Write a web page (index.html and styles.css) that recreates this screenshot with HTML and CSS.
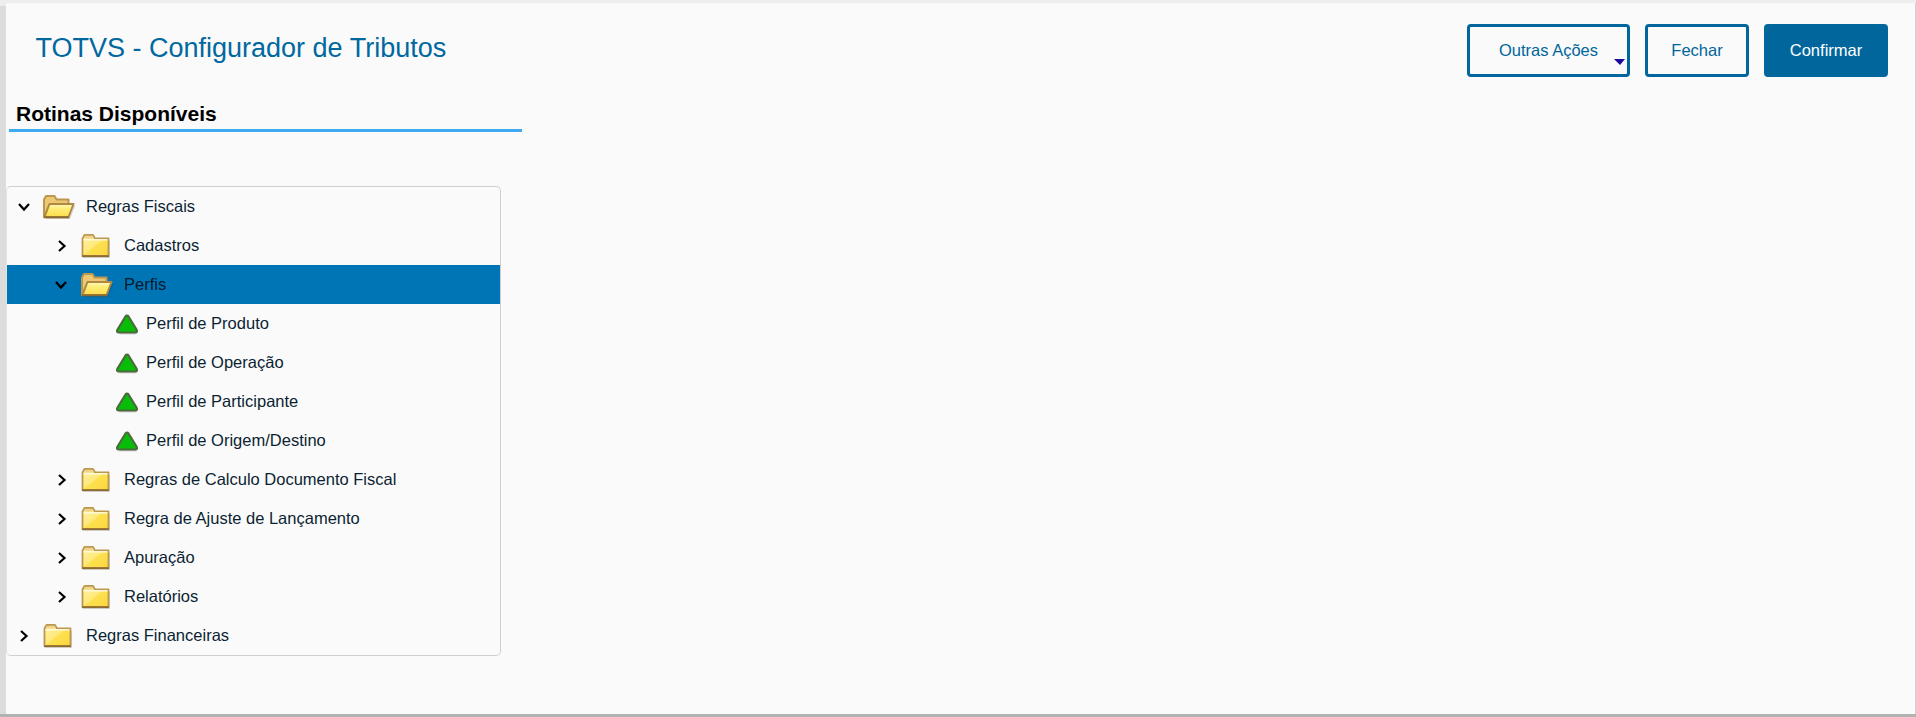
FILE: index.html
```html
<!DOCTYPE html>
<html lang="pt">
<head>
<meta charset="utf-8">
<title>TOTVS - Configurador de Tributos</title>
<link rel="stylesheet" href="styles.css">
</head>
<body>
<svg class="defs" width="0" height="0" aria-hidden="true">
  <defs>
    <linearGradient id="fy" x1="0" y1="0" x2="1" y2="1">
      <stop offset="0" stop-color="#fff2a8"/><stop offset="0.48" stop-color="#ffe97a"/><stop offset="0.52" stop-color="#fde050"/><stop offset="1" stop-color="#fbd63c"/>
    </linearGradient>
    <linearGradient id="fo" x1="0" y1="0" x2="0" y2="1">
      <stop offset="0" stop-color="#fff8c0"/><stop offset="0.35" stop-color="#ffef78"/><stop offset="1" stop-color="#fcdc48"/>
    </linearGradient>
    <symbol id="closed" viewBox="0 0 30 26">
      <path d="M2 25 H29 V8 H27 V24 H2 Z" fill="#000" opacity=".14"/>
      <path d="M1.500 23 V5.500 L3.500 2 H12 L14 5.500 H27.500 V23 Z" fill="url(#fy)" stroke="#bc9750" stroke-width="1.800" stroke-linejoin="round"/>
      <path d="M4 2.800 H11.500 L13 5.500 H3 Z" fill="#f0d48c"/>
      <path d="M2.500 6.800 H26.500" stroke="#fff9d8" stroke-width="1.500"/>
      <path d="M1 23.200 H28" stroke="#8f6c2e" stroke-width="1.800"/>
    </symbol>
    <symbol id="open" viewBox="0 0 34 26">
      <path d="M4 25 H28 L33 12 L32 11 L27 24 H4 Z" fill="#000" opacity=".16"/>
      <path d="M2 23 V5.500 L4 2 H12.500 L14.500 5.500 H26.500 V10 H8 L2 23 Z" fill="#ecc874" stroke="#bc9750" stroke-width="2" stroke-linejoin="round"/>
      <path d="M7.500 10 H31.500 L26.500 23 H2.500 Z" fill="url(#fo)" stroke="#b08a44" stroke-width="2" stroke-linejoin="round"/>
      <path d="M2 23.300 H27" stroke="#8f6c2e" stroke-width="2"/>
    </symbol>
    <symbol id="tri" viewBox="0 0 24 22">
      <path d="M4 21.500 H21 L22 20 H5 Z" fill="#000" opacity=".15"/>
      <path d="M12 2.500 Q12.800 2.500 13.500 3.500 L21.500 16.500 Q23 19.500 20 19.500 H4 Q1 19.500 2.500 16.500 L10.500 3.500 Q11.200 2.500 12 2.500 Z" fill="#08bd08" stroke="#4c6a3c" stroke-width="2.200" stroke-linejoin="round"/>
    </symbol>
    <symbol id="right" viewBox="0 0 12 14"><path d="M3 2 L8.500 7 L3 12" fill="none" stroke="#000" stroke-width="2.200"/></symbol>
    <symbol id="down" viewBox="0 0 14 12"><path d="M2 3 L7 8.500 L12 3" fill="none" stroke="#000" stroke-width="2.200"/></symbol>
  </defs>
</svg>
<main class="window">
  <header class="topbar">
    <h1 class="title">TOTVS - Configurador de Tributos</h1>
    <div class="actions">
      <button class="btn btn-more" type="button">Outras Ações<span class="caret"></span></button>
      <button class="btn btn-close" type="button">Fechar</button>
      <button class="btn btn-primary" type="button">Confirmar</button>
    </div>
  </header>
  <h2 class="section">Rotinas Disponíveis</h2>
  <ul class="tree">
    <li class="row l0"><svg class="tg tg-d"><use href="#down"/></svg><svg class="ic-open"><use href="#open"/></svg><span>Regras Fiscais</span></li>
    <li class="row l1"><svg class="tg tg-r"><use href="#right"/></svg><svg class="ic-closed"><use href="#closed"/></svg><span>Cadastros</span></li>
    <li class="row l1 selected"><svg class="tg tg-d"><use href="#down"/></svg><svg class="ic-open"><use href="#open"/></svg><span>Perfis</span></li>
    <li class="row l2"><svg class="ic-tri"><use href="#tri"/></svg><span>Perfil de Produto</span></li>
    <li class="row l2"><svg class="ic-tri"><use href="#tri"/></svg><span>Perfil de Operação</span></li>
    <li class="row l2"><svg class="ic-tri"><use href="#tri"/></svg><span>Perfil de Participante</span></li>
    <li class="row l2"><svg class="ic-tri"><use href="#tri"/></svg><span>Perfil de Origem/Destino</span></li>
    <li class="row l1"><svg class="tg tg-r"><use href="#right"/></svg><svg class="ic-closed"><use href="#closed"/></svg><span>Regras de Calculo Documento Fiscal</span></li>
    <li class="row l1"><svg class="tg tg-r"><use href="#right"/></svg><svg class="ic-closed"><use href="#closed"/></svg><span>Regra de Ajuste de Lançamento</span></li>
    <li class="row l1"><svg class="tg tg-r"><use href="#right"/></svg><svg class="ic-closed"><use href="#closed"/></svg><span>Apuração</span></li>
    <li class="row l1"><svg class="tg tg-r"><use href="#right"/></svg><svg class="ic-closed"><use href="#closed"/></svg><span>Relatórios</span></li>
    <li class="row l0"><svg class="tg tg-r"><use href="#right"/></svg><svg class="ic-closed"><use href="#closed"/></svg><span>Regras Financeiras</span></li>
  </ul>
</main>
</body>
</html>
```
FILE: styles.css
```css
* { box-sizing: border-box; }
html, body { margin: 0; height: 100%; }
body {
  overflow: hidden;
  background: #ededed;
  padding: 3px 1px 3px 6px;
  font-family: "Liberation Sans", Arial, sans-serif;
  position: relative;
}
body::before {
  content: "";
  position: absolute;
  left: 0; top: 6px; bottom: 0;
  width: 6px;
  background: #dcdcdc;
}
body::after {
  content: "";
  position: absolute;
  left: 0; right: 0; bottom: 0;
  height: 3px;
  background: #b2b2b2;
}
.defs { position: absolute; }
.window {
  position: relative;
  z-index: 1;
  height: 711px;
  background: #fafafa;
  box-shadow: 1px 0 0 #cfcfcf;
}
.topbar {
  display: flex;
  justify-content: space-between;
  align-items: flex-start;
  padding: 21px 27px 0 29.500px;
  height: 85px;
}
.title {
  margin: 9px 0 0;
  font-size: 27px;
  line-height: 31px;
  font-weight: 400;
  color: #00689f;
}
.actions { display: flex; gap: 15px; }
.btn {
  position: relative;
  height: 53px;
  border: 3px solid #00669b;
  border-radius: 4px;
  background: #fafafa;
  color: #00669b;
  font: 400 16.500px "Liberation Sans", Arial, sans-serif;
  padding: 0;
}
.btn-more { width: 163px; }
.btn-close { width: 104px; }
.btn-primary { width: 124px; background: #00669b; color: #fff; }
.caret {
  position: absolute;
  right: 2px;
  bottom: 9px;
  border-left: 6px solid transparent;
  border-right: 5px solid transparent;
  border-top: 6px solid #1c0a9c;
}
.section {
  margin: 0 0 0 3px;
  width: 513px;
  height: 44px;
  padding: 14px 0 0 7px;
  border-bottom: 3px solid #3fa9f2;
  font-size: 21px;
  line-height: 23px;
  font-weight: 700;
  color: #000;
}
.tree {
  list-style: none;
  margin: 54px 0 0;
  padding: 0;
  width: 495px;
  height: 470px;
  border: 1px solid #cfcfcf;
  border-left-color: #e2e2e2;
  border-radius: 5px;
}
.row {
  display: flex;
  align-items: center;
  height: 39px;
  font-size: 16.500px;
  color: #0c1f33;
}
.selected { background: #0075b5; color: #07192b; }
.l0 { padding-left: 10px; }
.l1 { padding-left: 48px; }
.l2 { padding-left: 108px; }
.tg { flex: none; }
.tg-r { width: 12px; height: 14px; margin: 0 13px 0 1px; }
.tg-d { width: 14px; height: 12px; margin-right: 11px; }
.l1 .tg-d { margin: 0 12px 0 -1px; }
.ic-closed { flex: none; width: 30px; height: 26px; margin-right: 13px; }
.ic-open { flex: none; width: 34px; height: 26px; margin-right: 10px; }
.ic-tri { flex: none; width: 24px; height: 22px; margin-right: 7px; }
.row span { white-space: nowrap; }
```
